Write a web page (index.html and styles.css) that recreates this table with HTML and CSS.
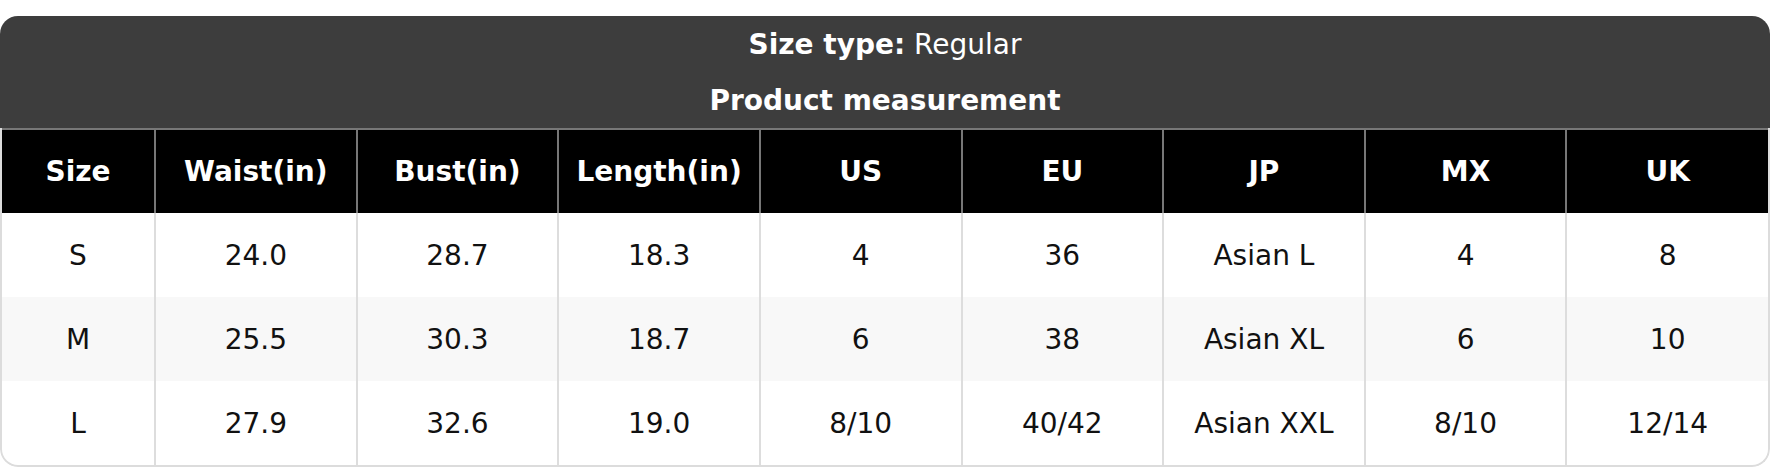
FILE: index.html
```html
<!DOCTYPE html>
<html>
<head>
<meta charset="utf-8">
<link rel="stylesheet" href="styles.css">
</head>
<body>
<div class="chart">
  <div class="caption">
    <div class="cap-line"><b>Size type:</b> Regular</div>
    <div class="cap-line"><b>Product measurement</b></div>
  </div>
  <div class="table-wrap">
    <table class="sizes">
      <colgroup>
        <col class="c-first">
        <col><col><col><col><col><col><col><col>
      </colgroup>
      <thead>
        <tr>
          <th>Size</th><th>Waist(in)</th><th>Bust(in)</th><th>Length(in)</th><th>US</th><th>EU</th><th>JP</th><th>MX</th><th>UK</th>
        </tr>
      </thead>
      <tbody>
        <tr><td>S</td><td>24.0</td><td>28.7</td><td>18.3</td><td>4</td><td>36</td><td>Asian L</td><td>4</td><td>8</td></tr>
        <tr class="alt"><td>M</td><td>25.5</td><td>30.3</td><td>18.7</td><td>6</td><td>38</td><td>Asian XL</td><td>6</td><td>10</td></tr>
        <tr><td>L</td><td>27.9</td><td>32.6</td><td>19.0</td><td>8/10</td><td>40/42</td><td>Asian XXL</td><td>8/10</td><td>12/14</td></tr>
      </tbody>
    </table>
  </div>
</div>
</body>
</html>
```

FILE: styles.css
```css
html, body {
  margin: 0;
  padding: 0;
  background: #ffffff;
}
body {
  padding-top: 16px;
  font-family: "DejaVu Sans", "Liberation Sans", sans-serif;
}
.chart {
  width: 1770px;
  border-radius: 18px;
  overflow: hidden;
  background: #ffffff;
}
.caption {
  background: #3d3d3d;
  color: #ffffff;
  text-align: center;
  font-size: 28px;
  height: 112px;
  padding-top: 1px;
  box-sizing: border-box;
}
.cap-line {
  height: 55px;
  line-height: 55px;
}
.cap-line + .cap-line {
  height: 56px;
  line-height: 58px;
}
.cap-line b {
  font-weight: bold;
}
.table-wrap {
  border: 2px solid #dcdcdc;
  border-top: none;
  border-radius: 0 0 18px 18px;
  overflow: hidden;
}
.sizes {
  width: 100%;
  table-layout: fixed;
  border-collapse: collapse;
  font-size: 28px;
}
.c-first {
  width: 153px;
}
.sizes th {
  background: #000000;
  color: #ffffff;
  font-weight: bold;
  height: 83px;
  padding: 0;
  text-align: center;
  border-top: 2px solid #777777;
  border-left: 2px solid #777777;
}
.sizes th:first-child {
  border-left: none;
}
.sizes td {
  height: 84px;
  padding: 0;
  text-align: center;
  color: #111111;
  border-left: 2px solid #dddddd;
}
.sizes td:first-child {
  border-left: none;
}
.sizes tr.alt td {
  background: #f8f8f8;
}
```
